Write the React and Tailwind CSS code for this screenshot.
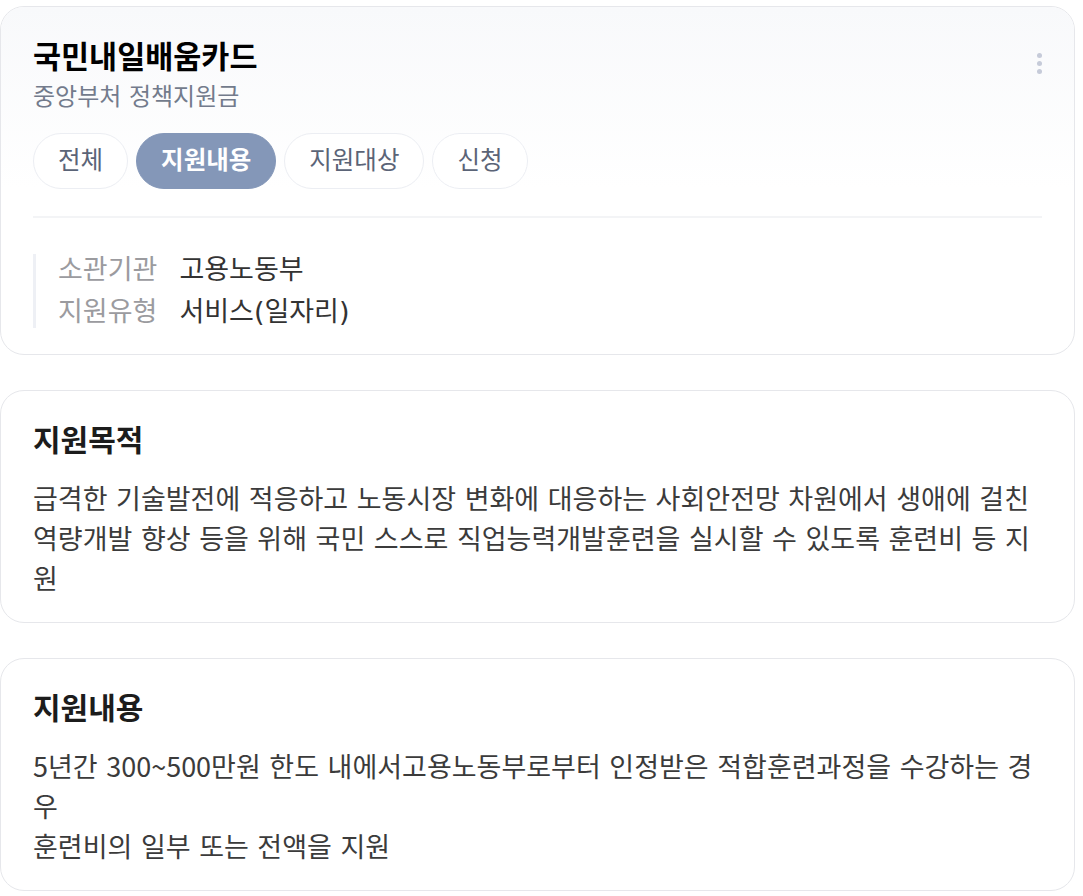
import { useState } from "react";

const tabs = ["전체", "지원내용", "지원대상", "신청"];

const info = [
  { label: "소관기관", value: "고용노동부" },
  { label: "지원유형", value: "서비스(일자리)" },
];

const sections = [
  {
    title: "지원목적",
    body: "급격한 기술발전에 적응하고 노동시장 변화에 대응하는 사회안전망 차원에서 생애에 걸친 역량개발 향상 등을 위해 국민 스스로 직업능력개발훈련을 실시할 수 있도록 훈련비 등 지원",
  },
  {
    title: "지원내용",
    body: "5년간 300~500만원 한도 내에서고용노동부로부터 인정받은 적합훈련과정을 수강하는 경우\n훈련비의 일부 또는 전액을 지원",
  },
];

function Section({ title, body }) {
  return (
    <section className="rounded-[24px] border border-[#e6e7eb] bg-white px-8 pt-[30px] pb-[24px]">
      <h2 className="text-[30px] leading-[40px] font-bold text-[#1c1c1c]">{title}</h2>
      <p className="mt-[17px] whitespace-pre-line font-['Noto_Sans_CJK_KR',sans-serif] text-[27px] leading-[40px] text-[#3b3b3b] [word-spacing:2.5px]">
        {body}
      </p>
    </section>
  );
}

export default function App() {
  const [active, setActive] = useState("지원내용");

  return (
    <div
      className="min-h-screen bg-white pt-[6px] pr-[8px]"
      style={{ fontFamily: '"DejaVu Sans", "Noto Sans CJK KR", sans-serif' }}
    >
      <div className="flex flex-col gap-[35px]">
        {/* 헤더 카드 */}
        <section className="overflow-hidden rounded-[24px] border border-[#e6e7eb] bg-white">
          <div className="bg-gradient-to-b from-[#f8f9fb] to-white px-8 pt-[31px]">
            <div className="flex items-start justify-between">
              <div>
                <h1 className="text-[30.5px] leading-[40px] font-bold text-black">국민내일배움카드</h1>
                <p className="mt-[4px] text-[24px] leading-[30px] text-[#737b8c]">중앙부처 정책지원금</p>
              </div>
              <button className="mt-[15px] flex flex-col items-center gap-[3px]">
                <span className="h-[5px] w-[5px] rounded-full bg-[#c6cbd9]" />
                <span className="h-[5px] w-[5px] rounded-full bg-[#c6cbd9]" />
                <span className="h-[5px] w-[5px] rounded-full bg-[#c6cbd9]" />
              </button>
            </div>

            <div className="mt-[21px] flex gap-2">
              {tabs.map((t) => (
                <button
                  key={t}
                  onClick={() => setActive(t)}
                  className={
                    t === active
                      ? "h-[56px] rounded-full border border-[#8497b8] bg-[#8497b8] px-6 text-[24.5px] font-bold text-white"
                      : "h-[56px] rounded-full border border-[#eceef3] bg-white px-6 text-[24.5px] text-[#5b6477]"
                  }
                >
                  {t}
                </button>
              ))}
            </div>
          </div>

          <div className="px-8 pb-[26px]">
            <div className="mt-[27px] h-[2px] bg-[#f3f4f6]" />
            <dl className="mt-[36px] flex flex-col gap-[10px] border-l-[3px] border-[#eef0f5] pl-[22px]">
              {info.map((row) => (
                <div key={row.label} className="flex gap-[22px] text-[27px] leading-[32px]">
                  <dt className="text-[#9b9b9f]">{row.label}</dt>
                  <dd className="text-[#333]">{row.value}</dd>
                </div>
              ))}
            </dl>
          </div>
        </section>

        {sections.map((s) => (
          <Section key={s.title} title={s.title} body={s.body} />
        ))}
      </div>
    </div>
  );
}
